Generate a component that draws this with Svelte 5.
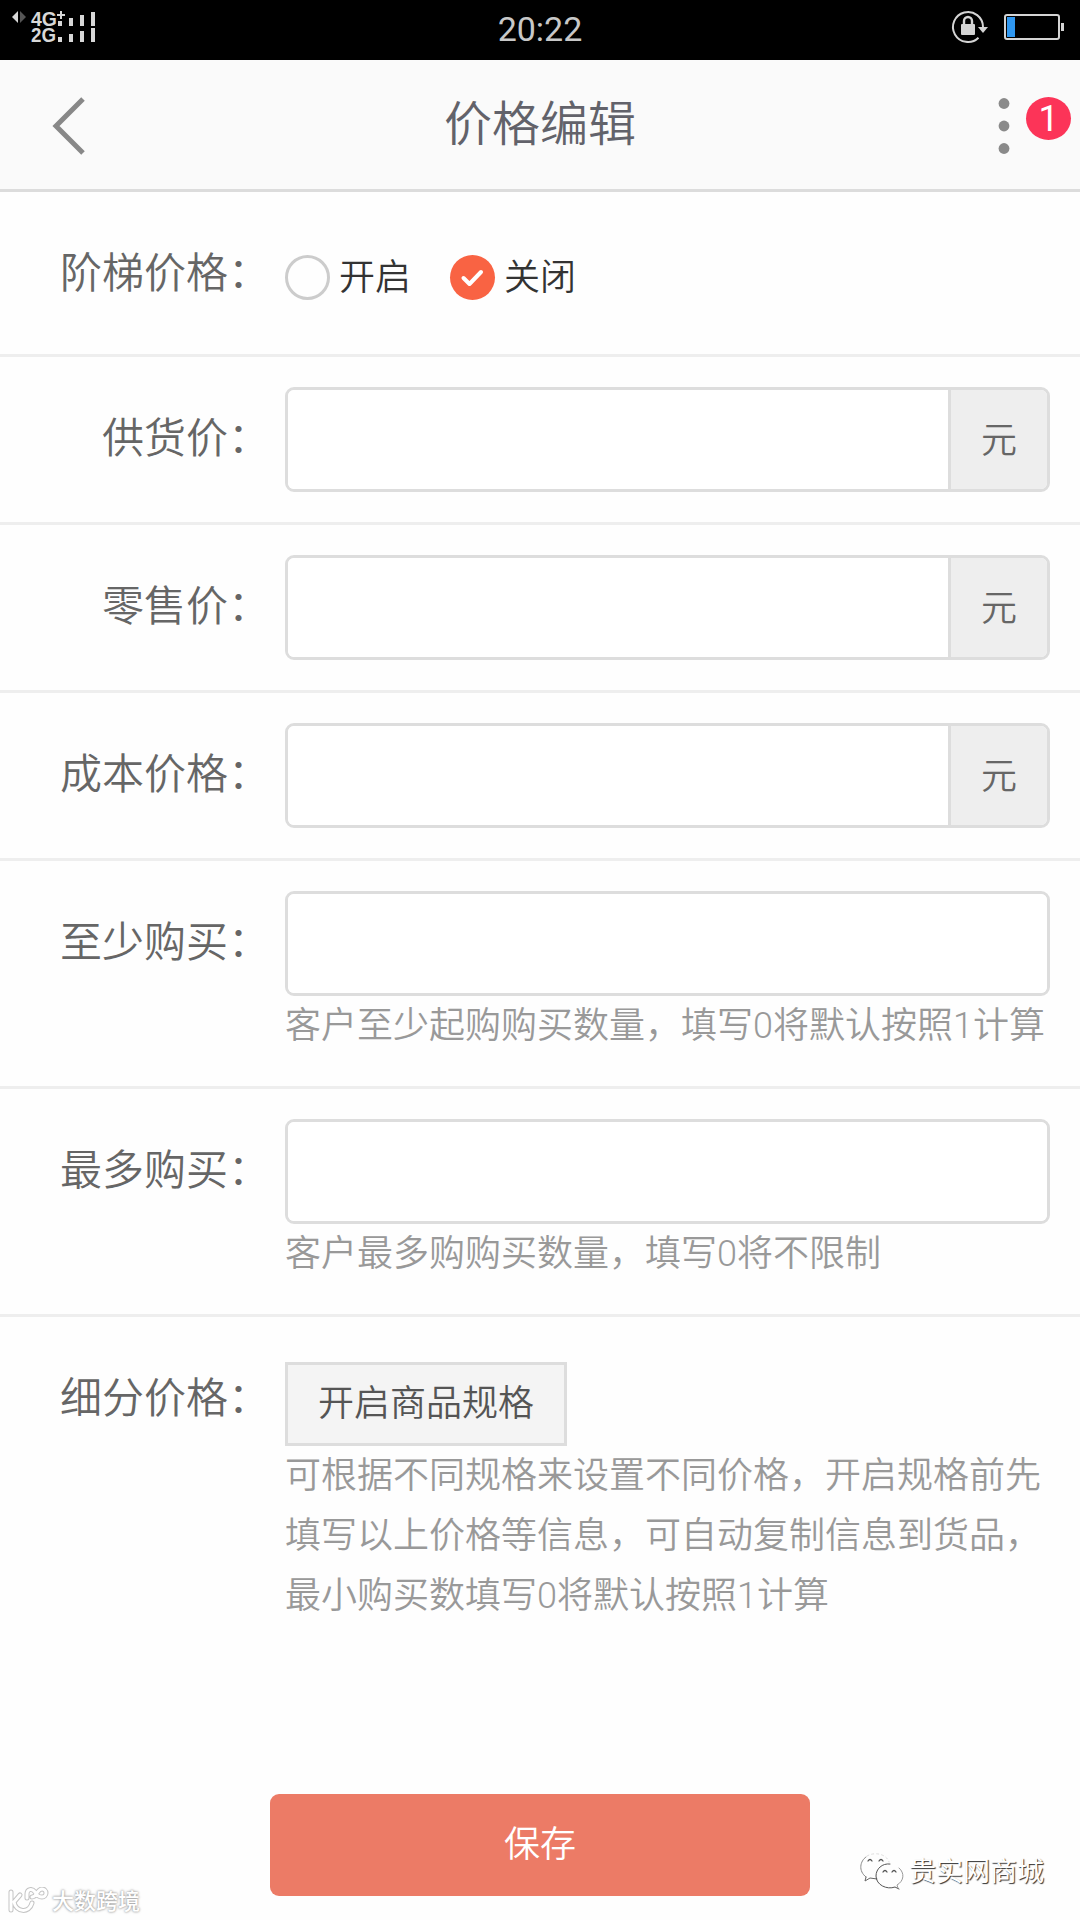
<script>
	let tiered = 'off';
	const options = [
		{ value: 'on', text: '开启' },
		{ value: 'off', text: '关闭' }
	];
	let fields = [
		{ label: '供货价', unit: '元', value: '' },
		{ label: '零售价', unit: '元', value: '' },
		{ label: '成本价格', unit: '元', value: '' },
		{ label: '至少购买', hint: '客户至少起购购买数量，填写0将默认按照1计算', value: '' },
		{ label: '最多购买', hint: '客户最多购购买数量，填写0将不限制', value: '' }
	];
</script>

<main>
	<div class="status">
		<svg class="signal" width="140" height="60" viewBox="0 0 140 60">
			<path d="M18 11v12l-6-6z" fill="#d8d8d8" />
			<path d="M20 11v12l6-6z" fill="#555" />
			<text x="31" y="26" textLength="26" lengthAdjust="spacingAndGlyphs">4G</text>
			<text x="31" y="42" textLength="25" lengthAdjust="spacingAndGlyphs">2G</text>
			<path d="M57 15h8M61 11v8" stroke="#d8d8d8" stroke-width="2" />
			<path d="M58 21h4v5h-4zM69 18h4v8h-4zM80 15h4v11h-4zM91 12h4v14h-4z" fill="#d8d8d8" />
			<path d="M58 37h4v5h-4zM69 34h4v8h-4zM80 31h4v11h-4zM91 28h4v14h-4z" fill="#d8d8d8" />
		</svg>
		<span class="time">20:22</span>
		<svg class="power" width="140" height="60" viewBox="940 0 140 60">
			<path d="M978.5 37.7A15 15 0 1 1 983 27" fill="none" stroke="#d4d4d4" stroke-width="2" />
			<path d="M978 27h10l-5 6z" fill="#d4d4d4" />
			<rect x="961" y="24" width="14" height="11" rx="1" fill="#d4d4d4" />
			<path d="M964 25v-4a4 4 0 0 1 8 0v4" fill="none" stroke="#d4d4d4" stroke-width="2.4" />
			<rect x="1005" y="15" width="54" height="24" rx="2" fill="none" stroke="#d4d4d4" stroke-width="2" />
			<rect x="1007" y="17" width="8" height="20" fill="#2f97f0" />
			<rect x="1061" y="23" width="3" height="8" fill="#d4d4d4" />
		</svg>
	</div>

	<header>
		<svg class="back" width="40" height="60" viewBox="0 0 40 60">
			<path d="M32 3L5 30l27 27" fill="none" stroke="#888" stroke-width="5" />
		</svg>
		<h1>价格编辑</h1>
		<div class="more">
			<svg width="12" height="58" viewBox="0 0 12 58" fill="#8a8a8a">
				<circle cx="6" cy="6.5" r="5.4" />
				<circle cx="6" cy="29" r="5.4" />
				<circle cx="6" cy="51.5" r="5.4" />
			</svg>
			<span class="badge">1</span>
		</div>
	</header>

	<form>
		<div class="row first">
			<span class="label">阶梯价格：</span>
			<div class="radios">
				{#each options as o}
					<label class="radio">
						<input type="radio" bind:group={tiered} value={o.value} />
						<span class="dot" class:checked={tiered === o.value}>
							{#if tiered === o.value}
								<svg width="45" height="45" viewBox="0 0 45 45">
									<path d="M13.5 23l6 6 11.5-12" fill="none" stroke="#fff" stroke-width="4" stroke-linecap="round" stroke-linejoin="round" />
								</svg>
							{/if}
						</span>
						<span class="text">{o.text}</span>
					</label>
				{/each}
			</div>
		</div>

		{#each fields as f}
			<div class="row">
				<span class="label">{f.label}：</span>
				<div class="content">
					<div class="group">
						<input class="input" type="text" bind:value={f.value} />
						{#if f.unit}
							<span class="unit">{f.unit}</span>
						{/if}
					</div>
					{#if f.hint}
						<p class="hint">{f.hint}</p>
					{/if}
				</div>
			</div>
		{/each}

		<div class="row last">
			<span class="label">细分价格：</span>
			<div class="content">
				<button type="button" class="spec">开启商品规格</button>
				<p class="hint">可根据不同规格来设置不同价格，开启规格前先填写以上价格等信息，可自动复制信息到货品，最小购买数填写0将默认按照1计算</p>
			</div>
		</div>

		<button type="button" class="save">保存</button>
	</form>

	<div class="mark mark-left">
		<svg width="42" height="30" viewBox="0 0 42 30" fill="none" stroke-linecap="round">
			{#each ['edge', 'fill'] as layer}
				<g class={layer}>
					<path d="M3 5v18M12 8l-6 7c2 10 15 12 18 1" />
					<path d="M19 11V7c0-5 5-6 8-2 2 4 4 5 7 5a4 4 0 1 0 0-8c-5 0-5 8-10 8" />
				</g>
			{/each}
		</svg>
		<span>大数跨境</span>
	</div>

	<div class="mark mark-right">
		<svg width="46" height="40" viewBox="0 0 46 40" fill="none" stroke-linecap="round">
			<path d="M7 25C-1 19 1 9 7 5" stroke="#888" />
			<path d="M8 4C17-1 28 3 30 10" stroke="#ddd" stroke-dasharray="2 3" />
			<path d="M7 25l-1 4 5-3 7 1" stroke="#666" />
			<path d="M9 9q2-3 4 0M20 9q2-3 4 0" stroke="#555" stroke-width="1.3" />
			<path d="M31 12c-8-1-14 5-14 12 0 9 11 14 19 11l4 2" stroke="#555" />
			<path d="M39 36l-1-3c7-4 8-12 2-17" stroke="#999" />
			<path d="M24 20q2-3 4 0M33 20q2-3 4 0" stroke="#555" stroke-width="1.3" />
		</svg>
		<span>贵实网商城</span>
	</div>
</main>

<style>
	:global(body) {
		margin: 0;
		background: #fefefe;
	}

	main {
		position: relative;
		width: 1080px;
		height: 1920px;
		overflow: hidden;
		background: #fefefe;
		color: #666;
		font-family: Roboto, "Noto Sans CJK SC", sans-serif;
		font-weight: 350;
	}

	.status {
		display: flex;
		justify-content: space-between;
		height: 60px;
		background: #000;
	}

	.signal text {
		font: bold 20px "Liberation Sans", sans-serif;
		fill: #d8d8d8;
	}

	.time {
		color: #c8c8c8;
		font-size: 34px;
		font-weight: 400;
		line-height: 58px;
	}

	header {
		box-sizing: border-box;
		display: grid;
		grid-template-columns: 200px 1fr 200px;
		align-items: center;
		height: 132px;
		padding-top: 3px;
		background: #fafafa;
		border-bottom: 3px solid #dcdcdc;
	}

	.back {
		margin-left: 51px;
	}

	h1 {
		margin: 0 0 3px;
		color: #62626a;
		font-size: 48px;
		font-weight: inherit;
		line-height: 70px;
		text-align: center;
	}

	.more {
		display: flex;
		justify-content: flex-end;
		align-items: center;
		gap: 16px;
		padding-right: 9px;
	}

	.badge {
		width: 45px;
		height: 43px;
		margin-bottom: 16px;
		border-radius: 50%;
		background: #fc3458;
		color: #fff;
		font-size: 36px;
		font-weight: 400;
		line-height: 44px;
		text-align: center;
	}

	.row {
		display: flex;
		padding: 30px 30px 30px 0;
		border-bottom: 3px solid #eee;
	}

	.first {
		padding-bottom: 27px;
	}

	.first .label,
	.radios {
		height: 105px;
	}

	.label {
		width: 270px;
		height: 102px;
		margin-right: 15px;
		font-size: 42px;
		line-height: 104px;
		text-align: right;
	}

	.content {
		flex: 1;
	}

	.radios {
		display: flex;
		align-items: flex-start;
		gap: 39px;
	}

	.radio {
		display: flex;
		align-items: center;
		padding-top: 33px;
		color: #333;
		font-size: 36px;
	}

	.radio input {
		display: none;
	}

	.text {
		height: 45px;
		line-height: 47px;
	}

	.dot {
		box-sizing: border-box;
		width: 45px;
		height: 45px;
		margin-right: 9px;
		border: 3px solid #ccc;
		border-radius: 50%;
	}

	.checked {
		border: none;
		background: #f96343;
	}

	.group {
		box-sizing: border-box;
		display: flex;
		height: 105px;
		border: 3px solid #ddd;
		border-radius: 9px;
		overflow: hidden;
	}

	.input {
		flex: 1;
		min-width: 0;
		padding: 0 20px;
		border: none;
		outline: none;
		background: #fff;
		font-size: 36px;
	}

	.unit {
		width: 96px;
		border-left: 3px solid #ddd;
		background: #eee;
		font-size: 36px;
		line-height: 102px;
		text-align: center;
	}

	.hint {
		margin: 0;
		color: #999;
		font-size: 36px;
		line-height: 60px;
	}

	.last {
		border: none;
	}

	.spec {
		display: block;
		box-sizing: border-box;
		width: 282px;
		height: 84px;
		margin-top: 15px;
		padding: 0 0 8px;
		border: 3px solid #ddd;
		background: #f4f4f4;
		color: #555;
		font: inherit;
		font-size: 36px;
	}

	.save {
		display: block;
		width: 540px;
		height: 102px;
		margin: 138px auto 0;
		padding: 0 0 8px;
		border: none;
		border-radius: 9px;
		background: #ec7b66;
		color: #fff;
		font: inherit;
		font-size: 36px;
	}

	/* watermarks lie over the page */
	.mark {
		position: absolute;
		display: flex;
		align-items: center;
		color: #fff;
	}

	.mark-left {
		left: 8px;
		bottom: 3px;
		gap: 2px;
		font-size: 22px;
		font-weight: 500;
		line-height: 30px;
		text-shadow: 0 0 2px #999, 0 0 3px #aaa;
	}

	.edge {
		stroke: #c4c4c4;
		stroke-width: 5;
	}

	.fill {
		stroke: #fff;
		stroke-width: 3;
	}

	.mark-right {
		left: 859px;
		top: 1852px;
		gap: 4px;
		font-size: 27px;
		font-weight: 400;
		line-height: 40px;
		text-shadow: 1px 1px 1px #333;
	}
</style>
